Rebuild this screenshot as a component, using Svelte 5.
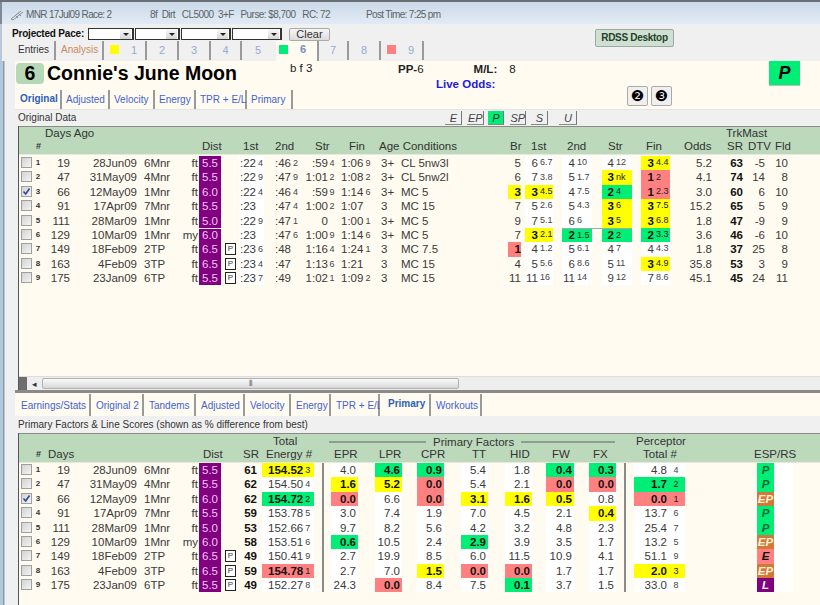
<script>
const O = 18;
const tpl = (cols) => {
  let s = [], p = O;
  for (const c of cols) { s.push(`${c[0] - p}px`, `${c[1] - c[0]}px`); p = c[1]; }
  return s.join(' ');
};
const parse = (v) => {
  const [a, color = ''] = String(v).split('|');
  const [t, sup] = a.split('^');
  return { t, sup, color };
};
// [x0, x1, align, kind/options]
const base = [
  [18, 34, 'chk'], [34, 42, 'num'], [42, 70, 'r'], [70, 137, 'r'], [144, 180, 'l'], [180, 198, 'r'],
  [199, 221, 'dist'], [225, 236, 'pb']
];
const topCols = [...base,
  [239, 264, 'l s1'], [275, 300, 'l'], [300, 336, 'r slot'], [341, 373, 'l'], [381, 398, 'l'], [401, 500, 'l'],
  [508, 521, 'r'], [525, 553, 'd d14'], [562, 592, 'd d13'], [602, 632, 'd d12'], [641, 670, 'd d14'],
  [680, 712, 'r'], [725, 743, 'r b'], [745, 765, 'r'], [768, 788, 'r']
];
const topRows = [
  [0, 1, 19, '28Jun09', '6Mnr', 'ft', '5.5', '', ':22^4', ':46^2', ':59^4', '1:06^9', '3+', 'CL 5nw3l', '5', '6^6.7', '4^10', '4^12', '3^4.4|y', '5.2', '63', '-5', '10'],
  [0, 2, 47, '31May09', '4Mnr', 'ft', '5.5', '', ':22^9', ':47^9', '1:01^2', '1:08^2', '3+', 'CL 5nw2l', '6', '7^3.8', '5^1.7', '3^nk|y', '1^2|r', '4.1', '74', '14', '8'],
  [1, 3, 66, '12May09', '1Mnr', 'ft', '6.0', '', ':22^4', ':46^4', ':59^9', '1:14^6', '3+', 'MC 5', '3|y', '3^4.5|y', '4^7.5', '2^4|g', '1^2.3|r', '3.0', '60', '6', '10'],
  [0, 4, 91, '17Apr09', '7Mnr', 'ft', '5.5', '', ':23', ':47^4', '1:00^2', '1:07', '3', 'MC 15', '7', '5^2.6', '5^4.3', '3^6|y', '3^7.5|y', '15.2', '65', '5', '9'],
  [0, 5, 111, '28Mar09', '1Mnr', 'ft', '5.0', '', ':22^9', ':47^1', '0', '1:00^1', '3+', 'MC 5', '9', '7^5.1', '6^6', '3^5|y', '3^6.8|y', '1.8', '47', '-9', '9'],
  [0, 6, 129, '10Mar09', '1Mnr', 'my', '6.0', '', ':23', ':47^6', '1:00^9', '1:14^6', '3+', 'MC 5', '7', '3^2.1|y', '2^1.5|g', '2^2|g', '2^3.3|g', '3.6', '46', '-6', '10'],
  [0, 7, 149, '18Feb09', '2TP', 'ft', '6.5', 'P', ':23^6', ':48', '1:16^4', '1:24^1', '3', 'MC 7.5', '1|r', '4^1.2', '5^6.1', '4^7', '4^4.3', '1.8', '37', '25', '8'],
  [0, 8, 163, '4Feb09', '3TP', 'ft', '6.5', 'P', ':23^4', ':47', '1:13^6', '1:21', '3', 'MC 15', '4', '5^5.6', '6^8.6', '5^11', '3^4.9|y', '35.8', '53', '3', '9'],
  [0, 9, 175, '23Jan09', '6TP', 'ft', '5.5', 'P', ':23^7', ':49', '1:02^1', '1:09^2', '3', 'MC 15', '11', '11^16', '11^14', '9^12', '7^8.6', '45.1', '45', '24', '11']
];
const botCols = [...base,
  [239, 257, 'r b'], [262, 314, 'l en'], [322, 324, 'sep'],
  [331, 358, 'r pr'], [375, 402, 'r pr'], [417, 444, 'r pr'], [461, 488, 'r pr'], [505, 532, 'r pr'],
  [546, 574, 'r pr'], [589, 616, 'r pr'], [624, 626, 'sep'], [634, 685, 'r pc'], [757, 774, 'esp'], [774, 793, 'wh']
];
const botRows = [
  [0, 1, 19, '28Jun09', '6Mnr', 'ft', '5.5', '', '61', '154.52^3|y', '', '4.0', '4.6|g', '0.9|g', '5.4', '1.8', '0.4|g', '0.3|g', '', '4.8^4', 'P|g', ''],
  [0, 2, 47, '31May09', '4Mnr', 'ft', '5.5', '', '62', '154.50^4', '', '1.6|y', '5.2|y', '0.0|r', '5.4', '2.1', '0.0|r', '0.0|r', '', '1.7^2|g', 'P|g', ''],
  [1, 3, 66, '12May09', '1Mnr', 'ft', '6.0', '', '62', '154.72^2|g', '', '0.0|r', '6.6', '0.0|r', '3.1|y', '1.6|y', '0.5|y', '0.8', '', '0.0^1|r', 'EP|o', ''],
  [0, 4, 91, '17Apr09', '7Mnr', 'ft', '5.5', '', '59', '153.78^5', '', '3.0', '7.4', '1.9', '7.0', '4.5', '2.1', '0.4|y', '', '13.7^6', 'P|g', ''],
  [0, 5, 111, '28Mar09', '1Mnr', 'ft', '5.0', '', '53', '152.66^7', '', '9.7', '8.2', '5.6', '4.2', '3.2', '4.8', '2.3', '', '25.4^7', 'P|g', ''],
  [0, 6, 129, '10Mar09', '1Mnr', 'my', '6.0', '', '58', '153.51^6', '', '0.6|g', '10.5', '2.4', '2.9|g', '3.9', '3.5', '1.7', '', '13.2^5', 'EP|o', ''],
  [0, 7, 149, '18Feb09', '2TP', 'ft', '6.5', 'P', '49', '150.41^9', '', '2.7', '19.9', '8.5', '6.0', '11.5', '10.9', '4.1', '', '51.1^9', 'E|r', ''],
  [0, 8, 163, '4Feb09', '3TP', 'ft', '6.5', 'P', '59', '154.78^1|r', '', '2.7', '7.0', '1.5|y', '0.0|r', '0.0|r', '1.7', '1.7', '', '2.0^3|y', 'EP|o', ''],
  [0, 9, 175, '23Jan09', '6TP', 'ft', '5.5', 'P', '49', '152.27^8', '', '24.3', '0.0|r', '8.4', '7.5', '0.1|g', '3.7', '1.5', '', '33.0^8', 'L|p', '']
];
const topHead1 = [[45, 100, 'Days Ago'], [726, 770, 'TrkMast']];
const topHead2 = [[36, 42, '#', 'hash'], [202, 224, 'Dist'], [243, 260, '1st'], [275, 297, '2nd'], [315, 332, 'Str'], [349, 372, 'Fin'], [379, 500, 'Age Conditions'], [510, 526, 'Br'], [531, 550, '1st'], [567, 590, '2nd'], [608, 626, 'Str'], [646, 664, 'Fin'], [684, 716, 'Odds'], [727, 746, 'SR'], [748, 774, 'DTV'], [775, 795, 'Fld']];
const botHead1 = [[273, 300, 'Total'], [636, 690, 'Perceptor']];
const botHead2 = [[36, 42, '#', 'hash'], [48, 78, 'Days'], [203, 224, 'Dist'], [243, 262, 'SR'], [266, 320, 'Energy #'], [334, 360, 'EPR'], [379, 405, 'LPR'], [421, 447, 'CPR'], [472, 490, 'TT'], [510, 532, 'HID'], [552, 572, 'FW'], [593, 614, 'FX'], [643, 690, 'Total #'], [754, 795, 'ESP/RS']];
const horseTabs = [['Entries', 40], ['Analysis', 48], ['', 43, 'yellow', '1'], ['', 32, '', '2'], ['', 32, '', '3'], ['', 31, '', '4'], ['', 34, '', '5'], ['', 43, 'green', '6'], ['', 30, '', '7'], ['', 32, '', '8'], ['', 43, 'red', '9']];
const origTabs = [['Original', 46], ['Adjusted', 48], ['Velocity', 45], ['Energy', 41], ['TPR + E/L', 51], ['Primary', 46]];
const lowTabs = [['Earnings/Stats', 75], ['Original 2', 53], ['Tandems', 52], ['Adjusted', 49], ['Velocity', 46], ['Energy', 40], ['TPR + E/L', 49], ['Primary', 51], ['Workouts', 51]];
const styles = [['E', 17, 0], ['EP', 17, 5], ['P', 16, 4], ['SP', 16, 6], ['S', 17, 5], ['U', 18, 11]];
</script>

{#snippet cell(v, c, i)}
  {@const p = parse(v)}
  {@const k = c[2]}
  <div class="cell {k} {p.color ? 'c-' + p.color : ''}" style="grid-column:{2 * i + 2}">
    {#if k === 'chk'}
      <span class="check">{#if v}<svg viewBox="0 0 11 11" width="11" height="11"><path d="M2.5 5.5 L4.7 8 L8.5 2.5" fill="none" stroke="#2a4a9a" stroke-width="1.6"/></svg>{/if}</span>
    {:else if k === 'pb'}
      {#if v}<span class="pbox">P</span>{/if}
    {:else if k.startsWith('d ')}
      <span class="dg">{p.t}</span>{#if p.sup}<span class="sup">{p.sup}</span>{/if}
    {:else if k === 'esp'}
      <i>{p.t}</i>
    {:else if k.includes('slot')}
      {p.t}<span class="sup fix">{p.sup ?? ''}</span>
    {:else if k.includes('pc')}
      {p.t}<span class="sup pcs">{p.sup ?? ''}</span>
    {:else}
      {p.t}{#if p.sup}<span class="sup">{p.sup}</span>{/if}
    {/if}
  </div>
{/snippet}

{#snippet rows(list, cols)}
  <div class="rows">
    {#each list as r, ri}
      <div class="row" class:brk={ri === 5 && cols === topCols} style="grid-template-columns:{tpl(cols)}">
        {#each cols as c, i}
          {@render cell(r[i], c, i)}
        {/each}
      </div>
    {/each}
  </div>
{/snippet}

{#snippet head(cols)}
  <div class="hrow" style="grid-template-columns:{tpl(cols)}">
    {#each cols as c, i}
      <span class={c[3] ?? ''} style="grid-column:{2 * i + 2}">{c[2]}</span>
    {/each}
  </div>
{/snippet}

<div class="app">
  <header class="titlebar">
    <svg class="logo" viewBox="0 0 14 12" width="14" height="12"><path d="M1 10 L11 2 M3 11 L13 3 M1 10 L3 11 M5 6 L8 9 M8 4 L11 7" stroke="#8a8f96" stroke-width="1" fill="none"/></svg>
    <span class="t1">MNR 17Jul09 Race: 2</span>
    <span class="t2">8f&nbsp; Dirt&nbsp;&nbsp; CL5000&nbsp; 3+F&nbsp;&nbsp; Purse: $8,700&nbsp;&nbsp; RC: 72</span>
    <span class="t3">Post Time: 7:25 pm</span>
  </header>

  <div class="toolbar">
    <b class="pp">Projected Pace:</b>
    {#each [46, 45, 50, 50] as w}
      <span class="combo" style="width:{w}px"><span class="arrow"></span></span>
    {/each}
    <button class="clear">Clear</button>
    <button class="rdss">RDSS Desktop</button>
  </div>

  <nav class="htabs">
    {#each horseTabs as [label, w, sw, n], i}
      <span class="htab" class:first={label === 'Entries'} class:analysis={label === 'Analysis'} class:cur={n === '6'} class:nosep={n === '5'} class:center={n && !sw} style="width:{w}px">
        {#if sw}<span class="swatch {sw}"></span>{/if}
        {#if label}{label}{:else}<span class="hn">{n}</span>{/if}
      </span>
    {/each}
  </nav>

  <main class="frame">
    <section class="horse">
      <div class="hleft">
        <div class="nameline">
          <span class="badge">6</span>
          <h1>Connie's June Moon</h1>
          <span class="sex">b f 3</span>
        </div>
        <nav class="tabs otabs">
          {#each origTabs as [label, w], i}
            <span class="tab" class:active={i === 0} style="width:{w}px">{label}</span>
          {/each}
        </nav>
      </div>
      <div class="hmid">
        <div class="ppline"><b>PP-</b>6<b class="ml">M/L:</b><span class="mlv">8</span></div>
        <b class="live">Live Odds:</b>
      </div>
      <div class="circles"><span class="cb">❷</span><span class="cb">❸</span></div>
      <div class="pbig">P</div>
    </section>

    <div class="subbar">
      <span class="lbl">Original Data</span>
      <div class="styles">
        {#each styles as [s, w, m]}
          <span class="st" class:on={s === 'P'} style="width:{w}px;margin-left:{m}px">{s}</span>
        {/each}
      </div>
    </div>

    <section class="table t1tab">
      <div class="thead h1">
        {@render head(topHead1)}
        {@render head(topHead2)}
      </div>
      {@render rows(topRows, topCols)}
      <div class="spacer"></div>
      <div class="scroll">
        <span class="sq"></span><span class="sa">◂</span>
        <span class="thumb">⦀</span>
      </div>
    </section>

    <div class="split"></div>

    <nav class="tabs ltabs">
      {#each lowTabs as [label, w]}
        <span class="tab" class:active={label === 'Primary'} style="width:{w}px">{label}</span>
      {/each}
    </nav>

    <div class="subbar low">
      <span class="lbl">Primary Factors &amp; Line Scores (shown as % difference from best)</span>
    </div>

    <section class="table t2tab">
      <div class="thead h2">
        {@render head(botHead1)}
        <div class="pf"><span class="pfl l1"></span><span class="pft">Primary Factors</span><span class="pfl l2"></span></div>
        {@render head(botHead2)}
      </div>
      {@render rows(botRows, botCols)}
    </section>
  </main>
</div>

<style>
:global(body) { margin: 0; background: #f0f0f0; }
.app {
  width: 820px; height: 605px; overflow: hidden; display: flex; flex-direction: column;
  font: 11.5px/14px "Liberation Sans", Arial, sans-serif; color: #3a3a3a; background: #f0f0f0;
  border-top: 2px solid #6b6f74; box-sizing: border-box;
  white-space: nowrap;
}
.titlebar {
  height: 22px; flex: none; display: flex; align-items: center; box-sizing: border-box; padding: 3px 0 0 8px;
  background: linear-gradient(#cad9e8, #e2ebf4); color: #5c6268;
  border-left: 2px solid #7e8a96;
}
.logo { margin-right: 2px; flex: none; }
.t1 { width: 124px; flex: none; font-size: 10px; letter-spacing: -0.65px; }
.t2 { width: 216px; flex: none; font-size: 10px; letter-spacing: -0.55px; }
.t3 { font-size: 10px; letter-spacing: -0.65px; }
.toolbar {
  height: 17px; flex: none; display: flex; align-items: center; padding: 3px 0 0 12px; font-size: 10px; letter-spacing: -0.2px; color: #111;
  border-left: 2px solid #b8c8d8; box-sizing: border-box;
}
.pp { width: 76px; flex: none; margin-left: -2px; }
.combo { height: 12px; box-sizing: border-box; border: 1px solid #333; background: #fff; margin-right: 1px; position: relative; display: block; flex: none; border-right-width: 2px; }
.arrow { position: absolute; right: 1px; top: 0; width: 11px; height: 10px; background: linear-gradient(#fafafa, #d5d5d5); }
.arrow::after { content: ""; position: absolute; left: 3px; top: 4px; border: 3px solid transparent; border-top-color: #222; border-bottom: 0; }
.clear {
  margin-left: 6px; width: 41px; height: 13px; padding: 0; font: 11px/11px "Liberation Sans", sans-serif; color: #333; flex: none;
  border: 1px solid #aaa; border-radius: 2px; background: linear-gradient(#f6f6f6, #dcdcdc);
}
.rdss {
  margin-left: 265px; margin-top: 8px; width: 79px; height: 18px; padding: 0; font: bold 10px/14px "Liberation Sans", sans-serif; letter-spacing: -0.3px; color: #24402c; flex: none;
  border: 1px solid #9aa; border-radius: 2px; background: #cfe0d0; position: relative; z-index: 2;
}
.htabs { height: 20px; flex: none; display: flex; padding-left: 14px; box-sizing: border-box; border-left: 2px solid #b8c8d8; }
.htab { box-sizing: border-box; height: 19px; padding: 2px 0 0 2px; border-right: 2px solid #9a9a9a; flex: none; display: flex; align-items: flex-start; color: #333; font-size: 10px; }
.htab.analysis { color: #c98a5a; padding-left: 5px; }
.htab.nosep { border-right-color: transparent; }
.htab.center { justify-content: center; padding-left: 0; }
.htab.cur { background: #fffbf0; height: 20px; padding-left: 3px; }
.htab.cur .hn { color: #7b8fc4; font-weight: bold; font-size: 11px; margin-top: -1px; }
.hn { color: #98a9d6; font-size: 11px; }
.swatch { width: 9px; height: 9px; margin: 2px 0 0 4px; flex: none; }
.swatch + .hn { margin-left: 12px; }
.htab.cur .swatch { margin-left: 0; }
.swatch.yellow { background: #ffff00; }
.swatch.green { background: #00ee76; }
.swatch.red { background: #ff8080; }
.frame { flex: 1; padding-left: 15px; min-height: 0; display: flex; flex-direction: column;
  background: linear-gradient(90deg, #b4c8dc 0, #b4c8dc 3px, #8e9aa6 3px, #8e9aa6 4px, #eff0f1 5px); }
.horse { height: 48px; flex: none; background: #fffbf0; display: flex; color: #222; }
.hleft { width: 381px; flex: none; }
.nameline { height: 29px; display: flex; align-items: flex-start; padding-top: 2px; box-sizing: border-box; }
.badge { width: 28px; height: 21px; background: #b7d8b7; border-radius: 4px; margin-left: 1px; font: bold 19.5px/21px "Liberation Sans", sans-serif; color: #000; text-align: center; flex: none; }
h1 { margin: 0 0 0 3px; width: 243px; font: bold 19.5px/21px "Liberation Sans", sans-serif; color: #000; flex: none; }
.sex { margin-top: -2px; font-size: 11.5px; }
.tabs { display: flex; height: 19px; }
.otabs { padding-left: 1px; }
.tab { box-sizing: border-box; height: 19px; padding: 3px 0 0 4px; border-right: 2px solid #9a9a9a; color: #3f63d0; font-size: 10px; flex: none; }
.tab.active { font-weight: bold; color: #2d60b8; background: #fffbf0; padding-top: 2px; }
.hmid { width: 231px; flex: none; display: flex; flex-direction: column; }
.ppline { height: 16px; padding-left: 2px; padding-top: 1px; box-sizing: border-box; font-size: 11.5px; }
.ppline .ml { margin-left: 50px; }
.mlv { margin-left: 12px; }
.live { color: #1a1ae0; margin-left: 40px; font-size: 11.5px; }
.circles { display: flex; gap: 3px; padding-top: 25px; flex: none; height: 20px; }
.cb { width: 21px; height: 20px; box-sizing: border-box; border: 1px solid #aaa; border-radius: 2px; background: #efefef; color: #000; font: 15px/18px "DejaVu Sans", sans-serif; text-align: center; }
.pbig { margin-left: 97px; width: 31px; height: 24px; background: #00ee76; font: italic bold 18px/24px "Liberation Sans", sans-serif; text-align: center; border-bottom: 1px solid #bbb; color: #000; }
.subbar { height: 17px; flex: none; background: #f0f0f0; display: flex; align-items: center; padding-left: 3px; box-sizing: border-box; font-size: 10px; border-top: 1px solid #e4e4e4; color: #333; }
.styles { display: flex; margin-left: 369px; }
.st { box-sizing: border-box; height: 14px; text-align: center; font: italic 11px/14px "Liberation Sans", sans-serif; border-bottom: 1px solid #888; border-right: 1px solid #777; color: #444; }
.st.on { background: #00ee76; color: #033; }
.table { flex: none; margin-left: 3px; border-left: 1px solid #555; background: #fffbf0; display: flex; flex-direction: column; }
.t1tab { height: 264px; }
.t2tab { flex: 1; }
.thead { background: #bcd9bc; border-top: 1px solid #8b8b8b; border-bottom: 1px solid #e8e8dd; color: #333; position: relative; }
.h1 { height: 27px; }
.h2 { height: 28px; }
.hrow { display: grid; height: 13px; line-height: 13px; margin-left: -1px; }
.h2 .hrow:first-child { margin-top: 1px; }
.hash { font-size: 9px; font-weight: bold; }
.pf { position: absolute; left: 310px; top: 1px; width: 286px; display: flex; align-items: center; height: 13px; }
.pfl { height: 2px; background: #8aa08a; flex: 1; margin-top: 1px; }
.l1 { flex: none; width: 97px; }
.pft { margin: 0 7px; }
.t1tab .rows { padding-top: 1px; }
.row { display: grid; height: 14.375px; line-height: 14.375px; margin-left: -1px; }
.cell { height: 14.375px; display: block; }
.r { text-align: right; }
.l { text-align: left; }
.b { font-weight: bold; color: #111; }
.num { font-size: 8px; font-weight: bold; text-align: center; color: #333; }
.check { display: block; width: 11px; height: 11px; box-sizing: border-box; margin: 1px 0 0 3px; border: 1px solid #a0a0a0; background: linear-gradient(135deg, #d2d2d2, #f4f4f4); position: relative; }
.check svg { position: absolute; left: -1px; top: -1px; }
.dist { background: #800080; color: #f0c8f0; text-align: center; }
.brk .dist { border-top: 1px solid #eee; box-sizing: border-box; line-height: 13.4px; }
.brk .d13, .brk .d12 { border-top: 1px solid #a6a6b4; box-sizing: border-box; }
.brk .d12 { position: relative; }
.brk .d12::before { content: ""; position: absolute; left: -10px; top: -1px; width: 10px; height: 1px; background: #a6a6b4; }
.pb { display: flex; align-items: center; }
.pbox { display: block; width: 11px; height: 12px; box-sizing: border-box; border: 1px solid #222; background: #fff; font: 8px/10px "Liberation Sans", sans-serif; text-align: center; }
.s1 { background: #fff; padding-left: 1px; box-sizing: border-box; }
.sup { font-size: 9px; line-height: 10px; margin-left: 2px; position: relative; top: -1px; color: #444; }
.fix { display: inline-block; width: 8px; margin-left: 0; text-align: center; }
.pcs { display: inline-block; width: 18px; margin-left: 0; text-align: center; }
.d { display: flex; align-items: center; justify-content: flex-start; background: #fff; }
.dg { display: block; text-align: right; flex: none; }
.d14 .dg { width: 13px; }
.d13 .dg { width: 13px; }
.d12 .dg { width: 12px; }
.pr { padding-right: 2px; box-sizing: border-box; background: #fff; }
.pc { background: #fff; }
.en { padding-left: 6px; box-sizing: border-box; background: #fff; }
.sep { background: #8a8a8a; }
.wh { background: #fff; }
.esp { text-align: center; font-weight: bold; background: #fff; }
.c-y { background: #ffff00; font-weight: bold; color: #111; }
.c-g { background: #00ee76; font-weight: bold; color: #111; }
.c-r { background: #ff8080; font-weight: bold; color: #111; }
.esp.c-o { background: #d2793a; color: #fff2d8; }
.esp.c-p { background: #800080; color: #fff; }
.esp.c-g { color: #063; }
.c-y .sup, .c-g .sup, .c-r .sup { font-weight: normal; color: #222; }
.spacer { flex: 1; }
.scroll { height: 14px; flex: none; display: flex; align-items: center; background: #eeeeee; border-top: 1px solid #ddd; box-sizing: border-box; }
.sq { width: 8px; height: 14px; background: #6e6e6e; flex: none; }
.sa { width: 15px; text-align: center; font-size: 9px; color: #333; flex: none; }
.thumb { width: 417px; height: 11px; border: 1px solid #b0b0b0; border-radius: 2px; box-sizing: border-box; background: linear-gradient(#fafafa, #d8d8d8); text-align: center; font-size: 8px; line-height: 10px; flex: none; color: #555; }
.split { height: 3px; flex: none; background: #8a8a8a; }
.ltabs { height: 23px; flex: none; background: #fffbf0; padding-left: 1px; padding-top: 1px; box-sizing: border-box; }
.ltabs .tab { padding-left: 5px; height: 22px; padding-top: 5px; }
.ltabs .tab.active { padding-left: 8px; padding-top: 3px; }
.low { height: 17px; border-top: 0; }
</style>
